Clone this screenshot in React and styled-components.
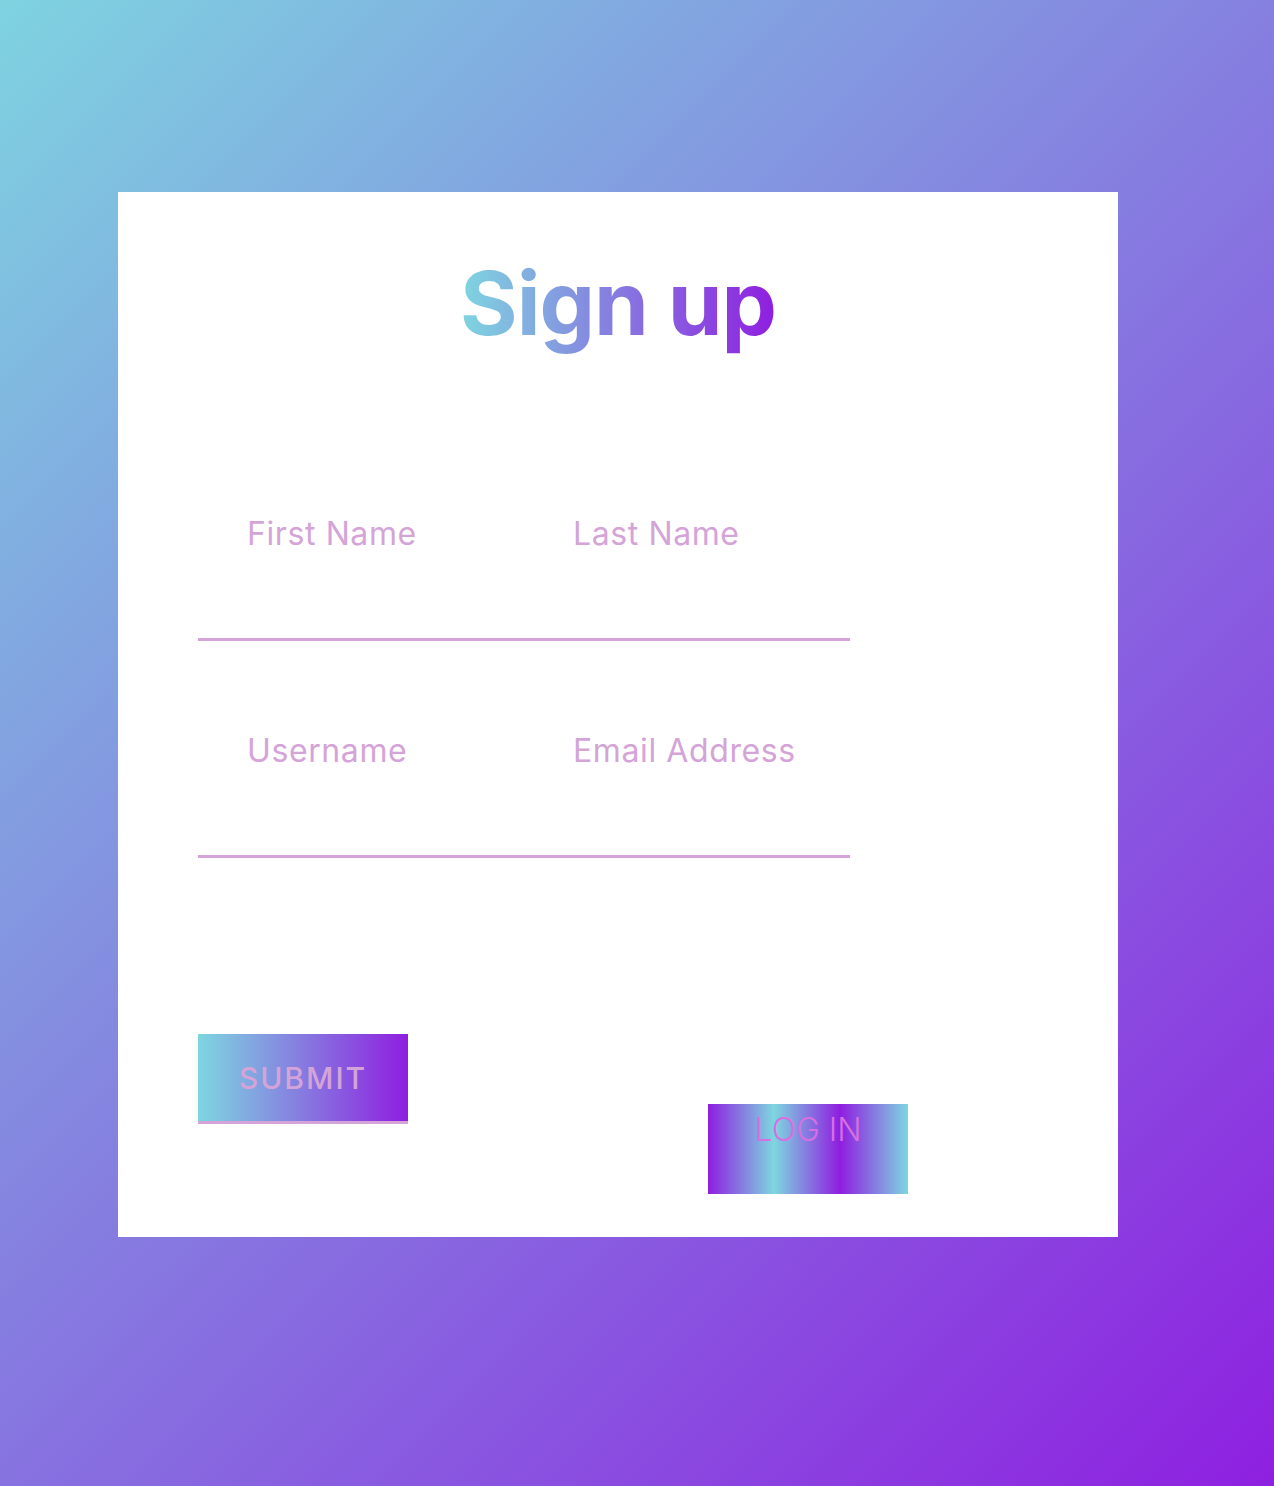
import React from "react";
import styled, { createGlobalStyle } from "styled-components";

const Global = createGlobalStyle`
  html, body { margin: 0; padding: 0; }
  body { font-family: Inter, "Open Sans", sans-serif; }
`;

const Page = styled.div`
  min-height: 1486px;
  box-sizing: border-box;
  padding: 192px 0 0 118px;
  background: linear-gradient(135deg, #7ed3e0 0%, #8e20e0 100%);
`;

const Card = styled.div`
  width: 1000px;
  height: 1045px;
  box-sizing: border-box;
  background: #fff;
  padding: 0 80px;
  display: flex;
  flex-direction: column;
`;

const Title = styled.h1`
  margin: 56px 0 0;
  align-self: center;
  font-family: Inter, sans-serif;
  font-weight: 700;
  font-size: 88px;
  line-height: 110px;
  letter-spacing: -1px;
  background: linear-gradient(90deg, #7ed6e0 0%, #8f1ee0 100%);
  -webkit-background-clip: text;
  background-clip: text;
  color: transparent;
`;

const Form = styled.form`
  display: flex;
  flex-direction: column;
  margin-top: 155px;
`;

const FieldRow = styled.div`
  width: 652px;
  display: grid;
  grid-template-columns: 326px 326px;
  border-bottom: 3px solid #d4a4d8;
  padding: 0 0 85px;
  & + & { margin-top: 89px; }
`;

const Input = styled.input`
  border: none;
  outline: none;
  background: transparent;
  padding: 0 0 0 49px;
  height: 40px;
  font-family: Inter, sans-serif;
  font-size: 32px;
  letter-spacing: 0.6px;
  color: #b070c0;
  &::placeholder { color: #d4a4d8; }
`;

const Buttons = styled.div`
  display: flex;
  align-items: flex-start;
  margin-top: 176px;
`;

const SubmitButton = styled.button`
  width: 210px;
  height: 90px;
  border: none;
  border-bottom: 3px solid #d4a4d8;
  padding: 0;
  background: linear-gradient(90deg, #7ed6e0 0%, #8f1ee0 100%);
  color: #d4a4d8;
  font-family: Inter, sans-serif;
  font-size: 30px;
  font-weight: 500;
  letter-spacing: 2px;
`;

const LoginButton = styled.button`
  width: 200px;
  height: 90px;
  margin: 70px 0 0 300px;
  border: none;
  padding: 6px 0 0;
  display: flex;
  justify-content: center;
  align-items: flex-start;
  background: linear-gradient(90deg, #8f1ee0 0%, #7ed6e0 33%, #8f1ee0 66%, #7ed6e0 100%);
  color: #d670e0;
  font-family: Inter, sans-serif;
  font-size: 32px;
  font-weight: 300;
  line-height: 40px;
`;

export default function App() {
  return (
    <>
      <Global />
      <Page>
        <Card>
          <Title>Sign up</Title>
          <Form onSubmit={(e) => e.preventDefault()}>
            <FieldRow>
              <Input placeholder="First Name" />
              <Input placeholder="Last Name" />
            </FieldRow>
            <FieldRow>
              <Input placeholder="Username" />
              <Input placeholder="Email Address" />
            </FieldRow>
            <Buttons>
              <SubmitButton type="submit">SUBMIT</SubmitButton>
              <LoginButton type="button">LOG IN</LoginButton>
            </Buttons>
          </Form>
        </Card>
      </Page>
    </>
  );
}
